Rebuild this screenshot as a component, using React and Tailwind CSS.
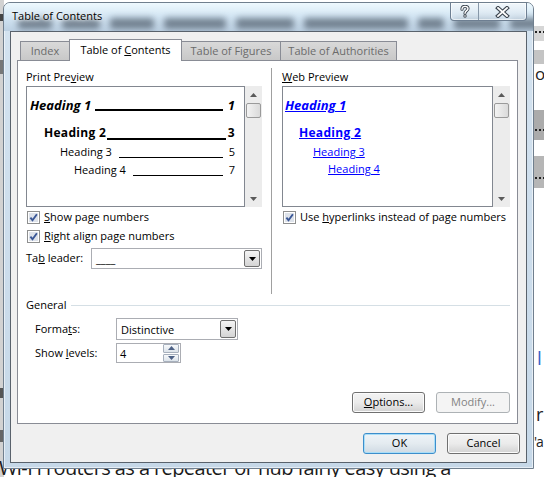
import React from 'react'

// small triangle glyph used by scrollbars, combos and the spinner
const Tri = ({ up, className = '' }) => (
  <svg width="7" height="4" viewBox="0 0 7 4" className={className}>
    <path d={up ? 'M0 4 L3.5 0 L7 4 Z' : 'M0 0 L7 0 L3.5 4 Z'} fill="currentColor" />
  </svg>
)

function CheckBox() {
  return (
    <span className="flex h-[13px] w-[13px] shrink-0 items-center justify-center border border-[#8e8f8f] bg-white">
      <svg width="11" height="11" viewBox="0 0 11 11">
        <rect x="1" y="1" width="9" height="9" fill="#dde2ea" />
        <path d="M2.4 5.6 L4.5 8.2 L8.9 2.2" fill="none" stroke="#3a5796" strokeWidth="1.9" />
      </svg>
    </span>
  )
}

function ScrollBar() {
  return (
    <div className="flex h-[121px] w-[17px] flex-col items-center bg-[#ececec] text-[#5a5a5a]">
      <div className="flex h-[17px] w-full items-center justify-center">
        <Tri up />
      </div>
      <div className="h-[15px] w-[15px] rounded-[2px] border border-[#9a9a9a] bg-linear-to-r from-[#f3f3f3] to-[#dadada]" />
      <div className="flex-1" />
      <div className="flex h-[17px] w-full items-center justify-center">
        <Tri />
      </div>
    </div>
  )
}

function Combo({ value, className = '' }) {
  return (
    <div className={`flex items-center border border-[#abadb3] bg-white ${className}`}>
      <span className="flex-1 pl-[4px] text-[11px] leading-[15px]">{value}</span>
      <span className="mr-px flex h-[calc(100%-2px)] w-[16px] items-center justify-center rounded-[2px] border border-[#707070] bg-linear-to-b from-[#f5f5f5] to-[#d4d4d4] text-black">
        <Tri />
      </span>
    </div>
  )
}

function Button({ children, className = '' }) {
  return (
    <div className={`flex h-[21px] items-center justify-center rounded-[3px] border text-[11px] ${className}`}>
      {children}
    </div>
  )
}

const btn = 'border-[#707070] bg-linear-to-b from-[#f3f3f3] via-[#ebebeb] to-[#d2d2d2] shadow-[inset_0_0_0_1px_#fbfbfb]'

function Tab({ children, active, className = '' }) {
  if (active) {
    return (
      <div className={`relative z-10 -mb-px flex h-[22px] items-center justify-center border border-b-0 border-[#898c95] bg-white text-[11px] text-black ${className}`}>
        {children}
      </div>
    )
  }
  return (
    <div className={`flex h-[19px] items-center justify-center border border-b-0 border-[#898c95] bg-linear-to-b from-[#d9d9d9] to-[#c8c8c8] text-[11px] text-[#6b6b6b] ${className}`}>
      {children}
    </div>
  )
}

// blurred words of the document seen through the glass title bar
const blobs = [34, 38, 44, 62, 58, 104, 26, 46, 40, 52]

export default function App() {
  return (
    <div className="relative h-[477px] w-[544px] overflow-hidden bg-white font-['Open_Sans',sans-serif] text-black">
      {/* document behind the dialog */}
      <div className="absolute left-0 top-0 h-full w-[4px] bg-[#d2d2d2]" />
      <div className="absolute left-0 top-[14px] h-[7px] w-[3px] bg-[#444]" />
      <div className="absolute left-0 top-[60px] h-[14px] w-[3px] bg-[#777]" />
      <div className="absolute left-0 top-[388px] h-[10px] w-[3px] bg-[#555]" />
      <div className="absolute left-0 top-[430px] h-[12px] w-[3px] bg-[#666]" />
      <div className="absolute left-[534px] top-[26px] h-[15px] w-[10px] bg-[#d6d6d6]" />
      <div className="absolute left-[535px] top-[31px] flex gap-[2px]">
        <span className="h-[2px] w-[2px] bg-[#222]" />
        <span className="h-[2px] w-[2px] bg-[#222]" />
        <span className="h-[2px] w-[2px] bg-[#222]" />
      </div>
      <div className="absolute left-[534px] top-[50px] h-[14px] w-[10px] bg-[#c4c4c4]" />
      <div className="absolute left-[535px] top-[64px] text-[17px] leading-[20px] text-[#222]">o</div>
      <div className="absolute left-[534px] top-[110px] h-[30px] w-[10px] bg-[#ababab]" />
      <div className="absolute left-[535px] top-[129px] flex gap-[2px]">
        <span className="h-[2px] w-[2px] bg-[#222]" />
        <span className="h-[2px] w-[2px] bg-[#222]" />
        <span className="h-[2px] w-[2px] bg-[#222]" />
      </div>
      <div className="absolute left-[534px] top-[156px] h-[32px] w-[10px] bg-[#b6b6b6]" />
      <div className="absolute left-[535px] top-[177px] flex gap-[2px]">
        <span className="h-[2px] w-[2px] bg-[#222]" />
        <span className="h-[2px] w-[2px] bg-[#222]" />
        <span className="h-[2px] w-[2px] bg-[#222]" />
      </div>
      <div className="absolute left-[537px] top-[346px] text-[19px] leading-[24px] text-[#3b64c8]">l</div>
      <div className="absolute left-[536px] top-[402px] text-[18px] leading-[24px] text-[#222]">r</div>
      <div className="absolute left-[534px] top-[431px] text-[14px] leading-[22px] tracking-[-1px] text-[#222]">'a</div>
      <div className="absolute left-[-1px] top-[456px] whitespace-nowrap text-[20px] leading-[24px] tracking-[-0.6px] text-[#1a1a1a]">
        Wi-Fi routers as a repeater or hub fairly easy using a
      </div>

      {/* dialog window */}
      <div className="absolute left-[3px] top-[2px] flex h-[467px] w-[531px] flex-col overflow-hidden rounded-t-[7px] border border-[#707f8e] bg-linear-to-b from-[#d4e3f0] to-[#c6d8e8] shadow-[inset_0_0_0_1px_rgba(255,255,255,0.55)]">
        {/* title bar */}
        <div className="relative flex h-[28px] shrink-0 overflow-hidden bg-linear-to-b from-[#eef9fe] via-[#d2e5f3] to-[#bcd0e2] pl-[8px]">
          <div className="pointer-events-none absolute left-[14px] top-[15px] flex gap-[10px] opacity-55 blur-[3px]">
            {blobs.map((w, i) => (
              <span key={i} className="h-[11px] rounded-[3px] bg-[#2f3b49]" style={{ width: w }} />
            ))}
          </div>
          <span className="relative mt-[5px] text-[11px] leading-[15px] [text-shadow:0_0_7px_#ffffff,0_0_3px_#ffffff]">
            Table of Contents
          </span>
          <div className="relative ml-auto mr-[6px] flex h-[18px] self-start rounded-b-[4px] border border-t-0 border-[#6e7f92] bg-linear-to-b from-[#f2f7fb]/80 to-[#d2e0ec]/70 shadow-[inset_0_0_0_1px_rgba(255,255,255,0.6)]">
            <div className="flex w-[28px] items-center justify-center border-r border-[#8797a8]">
              <svg width="10" height="13" viewBox="0 0 10 13">
                <path d="M2 4.2 C2 2.2 3.4 1.4 5 1.4 C6.8 1.4 8 2.4 8 3.8 C8 5.6 5 5.8 5 8.2" fill="none" stroke="#3d4650" strokeWidth="3.2" strokeLinecap="round" />
                <path d="M2 4.2 C2 2.2 3.4 1.4 5 1.4 C6.8 1.4 8 2.4 8 3.8 C8 5.6 5 5.8 5 8.2" fill="none" stroke="#ffffff" strokeWidth="1.4" strokeLinecap="round" />
                <circle cx="5" cy="11" r="1.7" fill="#3d4650" />
                <circle cx="5" cy="11" r="0.8" fill="#ffffff" />
              </svg>
            </div>
            <div className="flex w-[47px] items-center justify-center">
              <svg width="15" height="12" viewBox="0 0 15 12">
                <path d="M3 2 L12 10 M12 2 L3 10" stroke="#3d4650" strokeWidth="4" strokeLinecap="square" />
                <path d="M3 2 L12 10 M12 2 L3 10" stroke="#ffffff" strokeWidth="1.8" strokeLinecap="square" />
              </svg>
            </div>
          </div>
        </div>

        {/* client area */}
        <div className="mx-[6px] mb-[5px] flex h-[432px] flex-col border border-[#59626c] bg-[#f0f0f0] px-[6px] pt-[7px]">
          {/* tabs */}
          <div className="flex h-[21px] items-end pl-[3px]">
            <Tab className="w-[50px]">Index</Tab>
            <Tab active className="-ml-px w-[113px]">
              <span>
                Table of <span className="underline">C</span>ontents
              </span>
            </Tab>
            <Tab className="-ml-px w-[100px]">Table of Figures</Tab>
            <Tab className="-ml-px w-[117px]">Table of Authorities</Tab>
          </div>

          {/* tab panel */}
          <div className="flex h-[364px] w-[501px] flex-col border border-[#898c95] bg-white pt-[7px] text-[11px]">
            <div className="flex h-[226px]">
              {/* print preview */}
              <div className="ml-[8px] flex w-[236px] flex-col">
                <div className="h-[18px] leading-[18px]">
                  Print Pre<span className="underline">v</span>iew
                </div>
                <div className="flex">
                  <div className="flex h-[121px] w-[219px] flex-col border border-[#828790] bg-white">
                    <div className="mt-[9px] flex h-[18px] items-end pl-[3px] pr-[9px] text-[13px] font-bold italic leading-[18px]">
                      <span>Heading 1</span>
                      <span className="mb-[3px] ml-[4px] mr-[5px] flex-1 border-b-2 border-black" />
                      <span>1</span>
                    </div>
                    <div className="mt-[10px] flex h-[18px] items-end pl-[17px] pr-[9px] text-[12px] font-bold leading-[18px] tracking-[0.3px]">
                      <span>Heading 2</span>
                      <span className="mb-[2px] ml-[1px] mr-[2px] flex-1 border-b-2 border-black" />
                      <span>3</span>
                    </div>
                    <div className="mt-[2px] flex h-[16px] items-end pl-[33px] pr-[9px] text-[11px] leading-[16px]">
                      <span>Heading 3</span>
                      <span className="mb-[2px] ml-[7px] mr-[6px] flex-1 border-b border-black" />
                      <span>5</span>
                    </div>
                    <div className="mt-[2px] flex h-[16px] items-end pl-[47px] pr-[9px] text-[11px] leading-[16px]">
                      <span>Heading 4</span>
                      <span className="mb-[2px] ml-[7px] mr-[6px] flex-1 border-b border-black" />
                      <span>7</span>
                    </div>
                  </div>
                  <ScrollBar />
                </div>
                <div className="mt-[2px] flex h-[16px] items-center gap-[4px] pl-px">
                  <CheckBox />
                  <span className="leading-[16px]">
                    <span className="underline">S</span>how page numbers
                  </span>
                </div>
                <div className="mt-[3px] flex h-[16px] items-center gap-[4px] pl-px">
                  <CheckBox />
                  <span className="leading-[16px]">
                    <span className="underline">R</span>ight align page numbers
                  </span>
                </div>
                <div className="mt-[4px] flex h-[21px] items-center">
                  <span className="w-[65px]">
                    Ta<span className="underline">b</span> leader:
                  </span>
                  <Combo value="____" className="h-[21px] w-[171px]" />
                </div>
              </div>

              <div className="ml-[9px] w-px bg-[#a0a0a0]" />

              {/* web preview */}
              <div className="ml-[10px] flex w-[228px] flex-col">
                <div className="h-[18px] leading-[18px]">
                  <span className="underline">W</span>eb Preview
                </div>
                <div className="flex">
                  <div className="flex h-[121px] w-[211px] flex-col border border-[#828790] bg-white text-[#0000ff]">
                    <div className="mt-[9px] h-[18px] pl-[2px] text-[13px] font-bold italic leading-[18px]">
                      <span className="underline">Heading 1</span>
                    </div>
                    <div className="mt-[10px] h-[18px] pl-[16px] text-[12px] font-bold leading-[18px] tracking-[0.3px]">
                      <span className="underline">Heading 2</span>
                    </div>
                    <div className="mt-[2px] h-[16px] pl-[30px] text-[11px] leading-[16px]">
                      <span className="underline">Heading 3</span>
                    </div>
                    <div className="mt-px h-[16px] pl-[45px] text-[11px] leading-[16px]">
                      <span className="underline">Heading 4</span>
                    </div>
                  </div>
                  <ScrollBar />
                </div>
                <div className="mt-[2px] flex h-[16px] items-center gap-[4px] pl-px">
                  <CheckBox />
                  <span className="leading-[16px]">
                    Use <span className="underline">h</span>yperlinks instead of page numbers
                  </span>
                </div>
              </div>
            </div>

            {/* general group */}
            <div className="ml-[8px] mr-[7px] mt-[3px] flex h-[16px] items-center">
              <span className="leading-[16px]">General</span>
              <span className="ml-[5px] h-px flex-1 bg-[#d5dfe5]" />
            </div>
            <div className="ml-[17px] mt-[5px] flex h-[22px] items-center">
              <span className="w-[81px]">
                Forma<span className="underline">t</span>s:
              </span>
              <Combo value="Distinctive" className="h-[22px] w-[122px]" />
            </div>
            <div className="ml-[17px] mt-[3px] flex h-[20px] items-center">
              <span className="w-[81px]">
                Show <span className="underline">l</span>evels:
              </span>
              <div className="flex h-[20px] w-[65px] items-center border border-[#abadb3] bg-white">
                <span className="flex-1 pl-[3px] leading-[15px]">4</span>
                <div className="mr-px flex h-[18px] w-[16px] flex-col gap-px">
                  <span className="flex flex-1 items-center justify-center rounded-[1px] border border-[#a7b0bd] bg-linear-to-b from-[#f7f9fb] to-[#dce3ea] text-[#4d6185]">
                    <Tri up />
                  </span>
                  <span className="flex flex-1 items-center justify-center rounded-[1px] border border-[#a7b0bd] bg-linear-to-b from-[#f7f9fb] to-[#dce3ea] text-[#4d6185]">
                    <Tri />
                  </span>
                </div>
              </div>
            </div>
            <div className="mr-[7px] mt-[29px] flex justify-end gap-[11px]">
              <Button className={`w-[73px] ${btn}`}>
                <span>
                  <span className="underline">O</span>ptions...
                </span>
              </Button>
              <Button className="w-[74px] border-[#adb2b5] bg-[#f4f4f4] text-[#838383]">Modify...</Button>
            </div>
          </div>

          {/* dialog buttons */}
          <div className="mt-[9px] flex justify-end gap-[11px]">
            <Button className="w-[73px] border-[#3d8ecb] bg-linear-to-b from-[#eef4f8] via-[#e4ebf0] to-[#cfdae3] shadow-[inset_0_0_0_1px_#a9def8]">OK</Button>
            <Button className={`w-[73px] ${btn}`}>Cancel</Button>
          </div>
        </div>
      </div>
    </div>
  )
}
